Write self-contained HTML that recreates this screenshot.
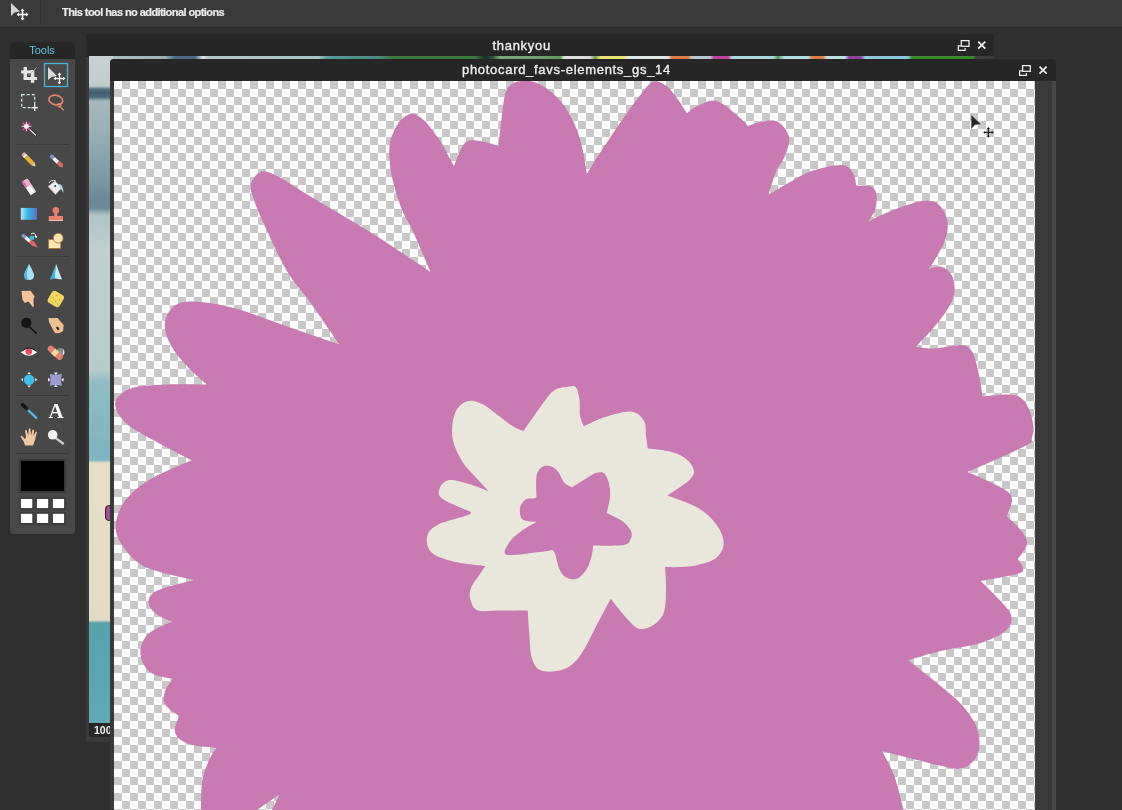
<!DOCTYPE html>
<html><head><meta charset="utf-8">
<style>
html,body{margin:0;padding:0;}
body{-webkit-font-smoothing:antialiased;width:1122px;height:810px;overflow:hidden;background:#2f2f2f;position:relative;font-family:"Liberation Sans",sans-serif;}
.abs{position:absolute;}
.txt,.tb,.hdr,text{will-change:transform;}
#topbar{left:0;top:0;width:1122px;height:27px;background:#3a3a3a;border-bottom:1px solid #2a2a2a;}
#topbar .sep{left:40px;top:0;width:1px;height:24px;background:#303030;}
#topbar .txt{left:62px;top:6px;-webkit-text-stroke:0.2px #ececec;font-size:11px;font-weight:bold;color:#ececec;white-space:nowrap;letter-spacing:-0.57px;}
#tools{left:10px;top:42px;width:65px;height:492px;background:#484848;border-radius:4px;overflow:hidden;}
#tools .hdr{left:0;top:0;width:65px;height:17px;background:#262626;color:#5ec6de;font-size:11px;text-align:center;line-height:17px;text-indent:-1px;}
#tools .hsep{left:6px;width:53px;height:1px;background:#393939;}
#back{left:86px;top:34px;width:908px;height:708px;background:#3a3a3a;border-radius:2px;overflow:hidden;}
#back .tb{left:0;top:0;width:908px;height:23px;-webkit-text-stroke:0.35px #f0f0f0;background:#262626;color:#f0f0f0;font-size:13px;text-align:center;line-height:23px;letter-spacing:0.7px;}
#back .ft{left:3px;top:689px;width:905px;height:14px;background:#262626;}
#front{left:110px;top:59px;width:946px;height:760px;background:#3a3a3a;border-radius:4px 4px 0 0;overflow:hidden;}
#front .tb{left:0;top:0;width:946px;height:22px;-webkit-text-stroke:0.35px #f0f0f0;background:#262626;color:#f0f0f0;font-size:13px;text-align:center;line-height:22px;letter-spacing:0.7px;}
#checker{left:4px;top:22px;width:921px;height:740px;background:conic-gradient(#c8c8c8 25%,#fff 0 50%,#c8c8c8 0 75%,#fff 0);background-size:16px 16px;background-position:0 0;}
</style></head><body>
<div id="topbar" class="abs">
 <svg class="abs" style="left:0;top:0" width="40" height="27" viewBox="0 0 40 27">
  <path d="M11 3 L11 16 L14.5 12.5 L20 11.5 Z" fill="#d4d4d4"/>
  <g stroke="#fff" stroke-width="1.6" fill="#fff">
   <line x1="17.5" y1="14.5" x2="27.5" y2="14.5"/><line x1="22.5" y1="9.5" x2="22.5" y2="19.5"/>
  </g>
  <path d="M22.5 8.5 L20.5 11 L24.5 11Z M22.5 20.5 L20.5 18 L24.5 18Z M16.5 14.5 L19 12.5 L19 16.5Z M28.5 14.5 L26 12.5 L26 16.5Z" fill="#fff"/>
 </svg>
 <div class="abs sep"></div>
 <div class="abs txt">This tool has no additional options</div>
</div>

<div id="tools" class="abs">
 <div class="abs hdr">Tools</div>
</div>
<svg class="abs" style="left:0;top:0" width="80" height="540" viewBox="0 0 80 540">
 <g fill="#393939"><rect x="16" y="144" width="53" height="1"/><rect x="16" y="256" width="53" height="1"/><rect x="16" y="395" width="53" height="1"/><rect x="16" y="453" width="53" height="1"/></g>
 <!-- selected box -->
 <rect x="44.5" y="63.5" width="23" height="23" fill="#4a4a4a" stroke="#4ab8d4" stroke-width="1.3"/>
 <!-- move icon -->
 <path d="M48 67 L48 80 L51.5 77 L57 76 Z" fill="#d8d8d8"/>
 <g stroke="#fff" stroke-width="1.3"><line x1="54.5" y1="78.5" x2="64.5" y2="78.5"/><line x1="59.5" y1="73.5" x2="59.5" y2="83.5"/></g>
 <path d="M59.5 72.5 L57.7 75 L61.3 75Z M59.5 84.5 L57.7 82 L61.3 82Z M53.5 78.5 L56 76.7 L56 80.3Z M65.5 78.5 L63 76.7 L63 80.3Z" fill="#fff"/>
 <!-- crop -->
 <g fill="#e4e4e4"><rect x="23.6" y="67" width="3.4" height="12"/><rect x="21.2" y="70.4" width="12" height="3.1"/><rect x="30.9" y="70" width="3.4" height="12.8"/><rect x="23.6" y="77" width="13.4" height="3"/></g>
 <line x1="28.4" y1="75.9" x2="36.7" y2="67.3" stroke="#aaa" stroke-width="0.8"/>
 <!-- marquee -->
 <rect x="21.7" y="94.7" width="13" height="13" fill="none" stroke="#d6eeee" stroke-width="1.2" stroke-dasharray="3 2"/>
 <g stroke="#fff" stroke-width="1.2"><line x1="31.5" y1="107.7" x2="38" y2="107.7"/><line x1="34.7" y1="104.5" x2="34.7" y2="111"/></g>
 <!-- lasso -->
 <ellipse cx="55.8" cy="100" rx="7" ry="4.7" fill="none" stroke="#e8806e" stroke-width="1.7" transform="rotate(12 55.8 100)"/>
 <path d="M57 104.5 Q60.5 103.5 61 105.5 Q60.5 107.5 58.5 106.5 Q59 105 63.8 110.3" fill="none" stroke="#e8806e" stroke-width="1.4"/>
 <!-- wand -->
 <line x1="27" y1="127" x2="35.5" y2="135" stroke="#222" stroke-width="2.6" stroke-linecap="round"/>
 <line x1="27" y1="127" x2="35.5" y2="135" stroke="#eee" stroke-width="1.2" stroke-linecap="round"/>
 <g stroke="#e04890" stroke-width="1.4"><line x1="26.4" y1="121.2" x2="26.4" y2="131.6"/><line x1="21.2" y1="126.4" x2="31.6" y2="126.4"/><line x1="22.7" y1="122.7" x2="30.1" y2="130.1"/><line x1="30.1" y1="122.7" x2="22.7" y2="130.1"/></g>
 <circle cx="26.4" cy="126.4" r="2.4" fill="#fff"/>
 <g stroke="#fff" stroke-width="0.7"><line x1="26.4" y1="122" x2="26.4" y2="131"/><line x1="22" y1="126.4" x2="31" y2="126.4"/></g>
 <!-- pencil -->
 <g transform="translate(22.6 153.4) rotate(45)">
  <rect x="0" y="-2.2" width="3" height="4.4" rx="1.5" fill="#f0a0b8"/><rect x="2.5" y="-2.2" width="2.2" height="4.4" fill="#f4f4f4"/>
  <rect x="4.6" y="-2.2" width="10" height="4.4" fill="#e8b030"/><path d="M14.6 -2.2 L18.4 0 L14.6 2.2Z" fill="#f4dca8"/>
 </g>
 <!-- brush -->
 <g transform="translate(50.3 155.2) rotate(43)">
  <rect x="0" y="-2" width="5" height="4" rx="2" fill="#8a8cd0"/><rect x="4.5" y="-1.8" width="6" height="3.6" fill="#f8f8f8"/>
  <path d="M10.5 -2 L15 -2.2 L17.5 0 L15 2.2 L10.5 2Z" fill="#e06464"/>
 </g>
 <!-- eraser -->
 <g transform="rotate(57 29 186.8)">
  <rect x="21" y="183.6" width="16" height="6.4" rx="1" fill="#f6f6f6"/>
  <rect x="21" y="183.6" width="7" height="6.4" rx="1" fill="#f6a8c8"/>
  <rect x="21" y="188.2" width="7" height="1.8" fill="#e070b0"/>
  <rect x="28" y="183.6" width="9" height="1.6" fill="#d8d8d8"/>
 </g>
 <!-- bucket -->
 <path d="M48 186.5 L55 181 L61.5 188 L55.5 194.5 Z" fill="#ececec" stroke="#bbb" stroke-width="0.5"/>
 <path d="M49 183 Q51 179 56 181" fill="none" stroke="#ddd" stroke-width="1"/>
 <circle cx="55.2" cy="186" r="0.9" fill="#333"/>
 <path d="M58 184 Q63 183 63.5 193 Q61.5 190 60 187.5 Z" fill="#a8daf4"/>
 <!-- gradient -->
 <defs><linearGradient id="gr" x1="0" x2="1"><stop offset="0" stop-color="#b4e8fa"/><stop offset="0.45" stop-color="#30b4e4"/><stop offset="1" stop-color="#5a70c8"/></linearGradient></defs>
 <rect x="20.8" y="207.9" width="16.3" height="11.9" fill="url(#gr)"/>
 <!-- stamp -->
 <circle cx="55.8" cy="210.3" r="3.3" fill="#e8806a"/><rect x="54.3" y="211" width="3" height="5.5" fill="#e8806a"/>
 <rect x="48.8" y="216" width="14.2" height="4.8" fill="#e8806a"/><rect x="48.8" y="220" width="14.2" height="0.9" fill="#f8d0c0"/>
 <!-- color replace -->
 <g transform="translate(22 234.5) rotate(40)">
  <rect x="0" y="-1.9" width="5" height="3.8" rx="1.9" fill="#8a8cd0"/><rect x="4.5" y="-1.7" width="6" height="3.4" fill="#f8f8f8"/>
  <path d="M10.5 -1.9 L15 -2.1 L20.5 0 L15 2.1 L10.5 1.9Z" fill="#e06464"/>
 </g>
 <rect x="29.8" y="236" width="4.2" height="3.8" fill="#38bce8"/>
 <path d="M31 234 Q35 231.5 36 236.5" fill="none" stroke="#fff" stroke-width="1"/><path d="M34.5 236 L37.5 236 L36 238.5Z" fill="#fff"/>
 <!-- shapes -->
 <rect x="48.5" y="239.4" width="12.2" height="9.1" fill="#f8e8b0" stroke="#b0703a" stroke-width="0.8"/>
 <circle cx="58.2" cy="238.1" r="4.9" fill="#f8e8b0" stroke="#b0703a" stroke-width="0.8"/>
 <!-- drop -->
 <path d="M29.1 264 Q24 273 24.2 275.5 Q24.5 280 29.1 280 Q33.8 280 34.1 275.5 Q34.2 273 29.1 264Z" fill="#a8e2f8"/>
 <path d="M29.1 264 Q24 273 24.2 275.5 Q24.5 280 29.1 280 Q26 277 27 272 Z" fill="#40c0e8"/>
 <!-- sharpen -->
 <path d="M56.1 264 L49.9 279.6 L54.5 278.5 Z" fill="#30b8e0"/><path d="M56.1 264 L54.5 278.5 L62 279.6 Z" fill="#c4eefa"/>
 <!-- smudge hand -->
 <path d="M21.5 291 L30.5 290.8 L34.7 296.5 L33.5 299 L33.5 303 L34 306.5 L32.5 306.8 L28.5 301.5 L25 303 L22.5 300 Z" fill="#f2c496"/>
 <!-- sponge -->
 <rect x="49" y="292.2" width="13.6" height="13.6" rx="3.2" fill="#f2d860" transform="rotate(30 55.8 299)"/>
 <g fill="#e0a030"><circle cx="53" cy="297.5" r="0.8"/><circle cx="57" cy="295.5" r="0.8"/><circle cx="59.5" cy="300" r="0.8"/><circle cx="55.5" cy="301.5" r="0.8"/><circle cx="52.5" cy="302" r="0.6"/><circle cx="57.5" cy="304" r="0.7"/></g>
 <!-- burn -->
 <line x1="29.5" y1="327" x2="36.2" y2="333.2" stroke="#111" stroke-width="1.6" stroke-linecap="round"/>
 <circle cx="26.4" cy="322.8" r="5.1" fill="#141414"/>
 <!-- dodge hand -->
 <path d="M48.5 318 L57.5 318 L63.7 325 L63 331 L59 333.2 L55 333 L52 328 L49 322 Z" fill="#f0c08e"/>
 <path d="M56 327 Q58.5 326 59.5 329 L57.5 330.5 Z" fill="#2a2a2a"/>
 <!-- red eye -->
 <path d="M20.8 352.2 Q28.9 345 37.1 352.2 Q28.9 359.2 20.8 352.2Z" fill="#fafafa"/>
 <circle cx="28.8" cy="351.6" r="3.3" fill="#f04860"/>
 <path d="M22.5 350.5 Q28.9 345.5 35.5 350.5" fill="none" stroke="#1a1a1a" stroke-width="1"/>
 <!-- bandage -->
 <circle cx="60.5" cy="352" r="4" fill="#8a8a8a"/><path d="M63.5 349 L64.5 353 L62.5 356Z" fill="#eee"/>
 <g transform="rotate(42 55.2 352.8)"><rect x="46.2" y="349.7" width="18" height="6.2" rx="3.1" fill="#e88070"/><rect x="52.5" y="349.7" width="5" height="6.2" fill="#f8dca0"/></g>
 <!-- bloat -->
 <circle cx="29.1" cy="379.8" r="5.2" fill="#40c0e8"/>
 <g fill="#f4f4f4"><path d="M29.1 372 L27.3 374 L30.9 374Z"/><path d="M29.1 387.6 L27.3 385.6 L30.9 385.6Z"/><path d="M21 379.8 L23 378 L23 381.6Z"/><path d="M37.2 379.8 L35.2 378 L35.2 381.6Z"/></g>
 <!-- pinch -->
 <path d="M49.8 373.8 Q55.8 375.5 61.8 373.8 Q60.3 379.8 61.8 385.8 Q55.8 384.3 49.8 385.8 Q51.3 379.8 49.8 373.8Z" fill="#9a9ccc"/>
 <g fill="#f4f4f4"><path d="M55.8 375 L53.8 372.5 L57.8 372.5Z"/><path d="M55.8 384.6 L53.8 387 L57.8 387Z"/><path d="M50.5 379.8 L48 377.8 L48 381.8Z"/><path d="M61.1 379.8 L63.6 377.8 L63.6 381.8Z"/></g>
 <!-- eyedropper -->
 <line x1="27.5" y1="409.5" x2="36" y2="417.6" stroke="#5ab8f0" stroke-width="2.4" stroke-linecap="round"/>
 <line x1="22.6" y1="404.8" x2="25.6" y2="407.6" stroke="#141414" stroke-width="3.6" stroke-linecap="round"/>
 <line x1="25.5" y1="407.6" x2="28" y2="410" stroke="#202020" stroke-width="3" />
 <!-- A -->
 <text x="56.2" y="418.2" font-family="Liberation Serif" font-weight="bold" font-size="21" fill="#fff" text-anchor="middle">A</text>
 <!-- hand -->
 <path d="M25 445.5 L33 445.5 L35 440 L37 432 L36 431.5 L33.5 436 L34 430 L32.5 429.5 L31 435.5 L30.5 428.6 L28.8 428.6 L28.3 435.5 L26.5 430 L25 430.5 L26 437.5 L25 439 L21.5 435.5 L20.5 436.5 L24 442 Z" fill="#f2c8a0"/>
 <!-- zoom -->
 <line x1="56" y1="438.2" x2="63" y2="443.5" stroke="#c8c8c8" stroke-width="2.4" stroke-linecap="round"/>
 <circle cx="52.7" cy="434.8" r="4.8" fill="#f4f4f4"/>
 <!-- swatches -->
 <rect x="19.2" y="459.2" width="46.7" height="33.7" fill="#383838"/>
 <rect x="20.9" y="460.9" width="43.1" height="30.1" fill="#000"/>
 <g fill="#383838"><rect x="19.4" y="497.4" width="14.4" height="12.2"/><rect x="35.4" y="497.4" width="14.3" height="12.2"/><rect x="51.4" y="497.4" width="14.2" height="12.2"/><rect x="19.4" y="512.3" width="14.4" height="12.2"/><rect x="35.4" y="512.3" width="14.3" height="12.2"/><rect x="51.4" y="512.3" width="14.2" height="12.2"/></g>
 <g fill="#fff"><rect x="20.9" y="498.9" width="11.4" height="9.2"/><rect x="36.9" y="498.9" width="11.3" height="9.2"/><rect x="52.9" y="498.9" width="11.2" height="9.2"/><rect x="20.9" y="513.8" width="11.4" height="9.2"/><rect x="36.9" y="513.8" width="11.3" height="9.2"/><rect x="52.9" y="513.8" width="11.2" height="9.2"/></g>
</svg>

<div id="back" class="abs">
 <div class="abs tb" style="text-align:left;text-indent:406.5px">thankyou</div>
 <div class="abs" style="left:3px;top:22px;width:905px;height:6px;background:linear-gradient(90deg,#c8d0d0 0.00px,#c4cece 19.00px,#a8c0c0 23.00px,#9ab4b8 76.00px,#4a6a8a 86.00px,#4a6a8a 106.00px,#e0e8e8 114.00px,#b0c8c8 119.00px,#a8c4c4 229.00px,#5a9aa0 239.00px,#4a8a7a 291.00px,#3a7a3a 301.00px,#3a7a3a 386.00px,#1a3030 396.00px,#2a4a3a 403.00px,#7aaa7a 411.00px,#6aa06a 456.00px,#5a9a5a 471.00px,#e0e0e0 475.00px,#dcdcdc 501.00px,#6a9a5a 506.00px,#e8e070 511.00px,#e8e070 535.00px,#e0e8e8 539.00px,#e0e8e8 579.00px,#e07a40 583.00px,#e07a40 599.00px,#b8c8d0 603.00px,#b8c8d0 621.00px,#c040a0 625.00px,#c040a0 639.00px,#a8d8e0 643.00px,#a8d8e0 684.00px,#5a9a5a 689.00px,#b0e0e8 695.00px,#b0e0e8 719.00px,#e08040 723.00px,#e08040 734.00px,#c0e0e8 738.00px,#c0e0e8 756.00px,#9040a0 760.00px,#9040a0 772.00px,#90c8e0 776.00px,#90c8e0 819.00px,#3a8a2a 823.00px,#3a8a2a 884.00px,#404040 887.00px,#3a3a3a 905.00px);"></div>
 <div class="abs" style="left:3px;top:22px;width:24px;height:667px;background:linear-gradient(180deg,#c8d2d2 0.00px,#c2cdce 30.00px,#5a7888 33.00px,#405c72 36.00px,#4c687a 41.00px,#a4b8bc 45.00px,#9cb2b6 69.00px,#8ca8b0 94.00px,#7a98a4 124.00px,#6a8898 142.00px,#6c8a98 152.00px,#b0c4c6 159.00px,#c0d0d0 194.00px,#b8cccc 314.00px,#90bcc4 326.00px,#7cb4c0 404.00px,#e6dec4 407.00px,#e2dac4 564.00px,#58a2ac 567.00px,#5aa6b0 624.00px,#60acb6 667.00px);"></div>
 <div class="abs" style="left:19px;top:471px;width:8px;height:16px;background:#a04c94;border:1px solid #3a2030;box-sizing:border-box;border-radius:4px;"></div>
 <div class="abs ft"></div>
 <div class="abs" style="left:8px;top:689px;font-size:10.5px;font-weight:bold;color:#f4f4f4;line-height:14px;">100%</div>
</div>

<div id="front" class="abs">
 <div class="abs tb" style="text-align:left;text-indent:352px">photocard_favs-elements_gs_14</div>
 <div id="checker" class="abs"></div>
 <div class="abs" style="left:925px;top:22px;width:17px;height:740px;background:#3a3a3a;"></div>
 <div class="abs" style="left:942px;top:22px;width:4px;height:740px;background:#484848;"></div>
</div>

<svg class="abs" style="left:0;top:0" width="1122" height="810" viewBox="0 0 1122 810">
 <defs><clipPath id="cl"><rect x="114" y="81" width="921" height="729"/></clipPath></defs>
 <g clip-path="url(#cl)">
  <path d="M202.0 782.0 C203.3 773.1 206.4 766.3 208.8 760.6 C211.2 754.9 216.5 747.7 216.5 747.7 C216.5 747.7 199.5 746.7 193.3 745.2 C187.1 743.8 182.5 741.6 179.4 739.0 C176.3 736.4 174.8 733.6 174.8 729.8 C174.8 725.9 179.4 715.9 179.4 715.9 C179.4 715.9 174.3 713.3 171.7 711.0 C169.1 708.7 165.0 705.6 164.0 702.0 C163.0 698.4 164.1 693.5 165.6 689.6 C167.1 685.7 173.0 678.8 173.0 678.8 C173.0 678.8 158.1 676.8 153.0 674.0 C147.9 671.2 144.4 666.5 142.4 661.9 C140.4 657.3 139.7 651.3 141.0 646.4 C142.3 641.5 144.9 636.6 150.0 632.5 C155.1 628.4 171.7 621.7 171.7 621.7 C171.7 621.7 160.2 617.1 156.3 614.0 C152.5 610.9 148.6 606.8 148.6 603.0 C148.6 599.2 148.7 594.8 156.3 591.0 C163.9 587.2 194.0 580.0 194.0 580.0 C194.0 580.0 158.5 573.0 147.0 567.8 C135.5 562.6 130.0 555.8 124.8 549.0 C119.6 542.2 115.6 535.0 115.6 527.0 C115.6 519.0 119.0 509.0 124.8 501.0 C130.7 493.0 139.6 485.7 150.7 478.9 C161.8 472.1 191.5 460.4 191.5 460.4 C191.5 460.4 151.3 439.7 139.6 432.6 C127.8 425.5 125.0 423.1 121.0 417.8 C117.0 412.5 113.8 406.0 115.6 401.0 C117.4 396.0 123.7 390.8 132.0 388.0 C140.3 385.2 153.1 385.0 165.6 384.4 C178.1 383.8 207.0 384.5 207.0 384.5 C207.0 384.5 199.7 378.9 194.6 373.8 C189.5 368.8 181.3 360.3 176.7 354.2 C172.1 348.1 168.9 342.4 167.0 337.0 C165.1 331.6 164.2 326.8 165.0 322.0 C165.8 317.2 168.5 311.4 172.0 308.0 C175.5 304.6 179.3 302.6 186.0 301.8 C192.7 301.0 203.6 302.1 212.4 303.4 C221.2 304.7 228.7 306.5 239.1 309.6 C249.5 312.7 262.9 317.9 274.8 322.1 C286.7 326.3 299.6 330.9 310.4 334.6 C321.1 338.3 339.3 344.5 339.3 344.5 C339.3 344.5 318.8 314.4 310.0 302.0 C301.2 289.6 294.2 283.5 286.3 270.0 C278.4 256.5 268.0 232.8 262.6 221.0 C257.2 209.2 255.7 205.1 253.7 198.9 C251.7 192.7 249.3 188.6 250.7 184.0 C252.1 179.4 256.8 172.5 261.9 171.5 C266.9 170.5 274.5 174.8 281.0 178.0 C287.5 181.2 291.9 185.0 300.8 190.5 C309.8 196.0 323.4 204.0 334.7 210.8 C346.0 217.6 357.2 224.1 368.5 231.1 C379.8 238.1 392.1 246.3 402.4 253.1 C412.7 259.9 430.4 271.8 430.4 271.8 C430.4 271.8 417.7 241.7 413.0 231.5 C408.3 221.3 405.6 218.5 402.4 210.8 C399.2 203.1 396.1 193.2 394.0 185.4 C391.9 177.6 390.6 171.0 389.9 164.2 C389.2 157.4 389.0 149.9 389.6 144.5 C390.2 139.1 391.6 136.1 393.5 132.0 C395.4 127.9 397.8 122.8 401.0 119.8 C404.2 116.8 408.7 113.6 412.6 113.8 C416.5 114.0 421.0 117.8 424.5 120.8 C428.0 123.8 430.6 128.0 433.4 131.6 C436.2 135.2 439.0 138.9 441.3 142.5 C443.6 146.1 445.1 149.5 447.2 153.4 C449.3 157.3 454.1 166.2 454.1 166.2 C454.1 166.2 460.7 147.0 465.0 142.8 C469.3 138.6 474.4 140.5 480.0 141.0 C485.6 141.5 498.5 146.0 498.5 146.0 C498.5 146.0 500.8 123.8 502.0 115.0 C503.2 106.2 503.8 98.2 505.5 93.0 C507.2 87.8 509.2 86.0 512.0 84.0 C514.8 82.0 518.3 81.3 522.0 81.0 C525.7 80.7 529.6 80.5 534.0 82.0 C538.4 83.5 543.9 86.2 548.6 89.8 C553.3 93.4 558.2 98.0 562.4 103.5 C566.6 109.0 570.7 115.8 574.0 123.0 C577.3 130.2 579.9 138.1 582.0 146.6 C584.1 155.1 586.9 174.0 586.9 174.0 C586.9 174.0 592.5 164.3 597.6 156.5 C602.7 148.7 610.8 136.5 617.3 127.0 C623.8 117.5 631.0 107.1 636.9 99.6 C642.8 92.1 647.6 84.3 652.5 82.0 C657.4 79.7 662.0 82.9 666.3 85.8 C670.5 88.7 674.6 95.0 678.0 99.6 C681.4 104.2 686.9 113.4 686.9 113.4 C686.9 113.4 693.0 107.9 698.0 105.8 C703.0 103.7 709.9 99.1 716.7 101.0 C723.5 102.9 733.8 112.8 739.0 117.0 C744.2 121.2 748.0 126.0 748.0 126.0 C748.0 126.0 756.0 122.4 761.0 121.7 C766.0 121.0 773.1 119.2 777.8 121.7 C782.5 124.2 787.8 131.3 789.0 137.0 C790.2 142.7 787.2 150.0 785.0 155.8 C782.8 161.6 778.8 165.5 776.0 172.0 C773.2 178.5 768.5 194.7 768.5 194.7 C768.5 194.7 783.3 185.7 790.7 181.7 C798.1 177.7 804.4 173.4 813.0 170.6 C821.6 167.8 835.8 164.4 842.6 165.0 C849.4 165.6 851.5 170.8 853.7 174.3 C855.9 177.8 856.0 186.0 856.0 186.0 C856.0 186.0 866.6 184.7 870.0 186.0 C873.4 187.3 875.7 190.0 876.5 194.0 C877.3 198.0 876.5 205.2 875.0 210.0 C873.5 214.8 867.5 222.6 867.5 222.6 C867.5 222.6 877.3 216.5 886.0 213.0 C894.7 209.5 910.9 203.0 919.6 201.5 C928.3 200.0 933.4 200.8 938.0 204.0 C942.6 207.2 946.1 214.9 947.4 220.7 C948.6 226.5 947.4 232.8 945.5 239.0 C943.6 245.2 938.8 252.8 936.0 257.8 C933.2 262.8 929.0 268.9 929.0 268.9 C929.0 268.9 938.0 265.5 942.0 267.0 C946.0 268.5 951.2 272.8 953.0 278.0 C954.8 283.2 955.5 291.1 953.0 298.5 C950.5 305.9 944.2 314.6 938.0 322.6 C931.8 330.6 916.0 346.7 916.0 346.7 C916.0 346.7 926.9 348.8 934.4 348.5 C941.9 348.2 954.9 344.8 961.0 345.0 C967.1 345.2 968.5 347.2 971.0 350.0 C973.5 352.8 974.5 357.0 976.0 362.0 C977.5 367.0 978.9 374.2 980.0 380.0 C981.1 385.8 982.6 396.7 982.6 396.7 C982.6 396.7 1004.9 393.9 1012.0 394.8 C1019.1 395.7 1021.6 397.7 1025.0 402.0 C1028.4 406.3 1031.4 414.7 1032.6 420.7 C1033.8 426.7 1033.3 433.8 1032.0 438.0 C1030.7 442.2 1035.7 440.4 1025.0 446.0 C1014.3 451.6 967.8 471.9 967.8 471.9 C967.8 471.9 995.6 483.9 1003.0 488.5 C1010.4 493.1 1011.4 495.0 1012.0 499.6 C1012.6 504.2 1006.7 516.3 1006.7 516.3 C1006.7 516.3 1018.1 526.4 1021.5 531.0 C1024.9 535.6 1027.6 539.3 1027.0 544.0 C1026.4 548.7 1017.8 559.0 1017.8 559.0 C1017.8 559.0 1023.0 565.5 1023.0 568.0 C1023.0 570.5 1024.8 571.5 1017.8 573.7 C1010.8 575.9 980.7 581.0 980.7 581.0 C980.7 581.0 1000.2 600.0 1005.4 606.3 C1010.5 612.6 1011.6 614.5 1011.6 618.6 C1011.6 622.7 1010.5 626.9 1005.4 631.0 C1000.2 635.1 991.5 639.7 980.7 643.0 C969.9 646.3 952.7 648.1 940.6 651.0 C928.5 653.9 908.2 660.3 908.2 660.3 C908.2 660.3 928.5 676.0 937.5 683.5 C946.5 691.0 955.3 697.3 962.0 705.0 C968.7 712.7 975.0 721.6 977.6 729.8 C980.2 738.0 980.2 748.0 977.6 754.4 C975.0 760.8 968.7 766.5 962.0 768.3 C955.3 770.1 950.8 767.9 937.5 765.0 C924.2 762.1 882.0 751.0 882.0 751.0 C882.0 751.0 890.7 766.2 894.3 776.0 C897.9 785.8 901.8 803.7 903.6 810.0 C905.4 816.3 905.0 814.0 905.0 814.0 C905.0 814.0 270.0 814.0 270.0 814.0 C270.0 814.0 279.6 794.3 279.6 794.3 C279.6 794.3 251.5 814.0 251.5 814.0 C251.5 814.0 201.0 814.0 201.0 814.0 C201.0 814.0 200.7 790.9 202.0 782.0 Z" fill="#c97ab3"/>
  <path d="M452.0 431.0 C452.0 425.8 452.9 419.0 454.5 414.5 C456.1 410.0 458.6 406.5 461.5 404.2 C464.4 401.9 467.8 400.4 471.8 400.7 C475.8 401.0 481.0 403.3 485.6 405.9 C490.2 408.5 494.8 412.9 499.4 416.3 C504.0 419.8 509.3 424.2 513.3 426.6 C517.3 429.1 523.6 431.0 523.6 431.0 C523.6 431.0 533.5 416.3 538.5 409.6 C543.5 402.9 548.4 394.8 553.3 391.0 C558.2 387.2 564.2 387.3 568.0 386.7 C571.8 386.1 574.1 385.3 576.0 387.5 C577.9 389.7 578.8 395.1 579.5 399.8 C580.2 404.5 579.3 411.2 580.0 415.6 C580.7 420.0 583.8 426.4 583.8 426.4 C583.8 426.4 597.1 419.5 605.0 417.0 C612.9 414.5 624.5 410.9 631.0 411.5 C637.5 412.1 641.5 416.7 644.0 420.7 C646.5 424.7 645.4 430.9 646.0 435.5 C646.6 440.1 647.8 448.5 647.8 448.5 C647.8 448.5 665.4 450.1 671.9 452.0 C678.4 453.9 683.0 456.5 686.7 459.6 C690.4 462.7 693.4 467.5 694.0 470.7 C694.6 473.9 692.7 476.1 690.5 478.8 C688.3 481.5 684.5 483.9 680.6 486.7 C676.7 489.5 667.0 495.6 667.0 495.6 C667.0 495.6 689.6 503.0 697.8 507.8 C706.0 512.6 712.0 518.5 716.3 524.4 C720.6 530.3 723.7 537.4 723.7 543.0 C723.7 548.6 720.6 554.1 716.3 557.8 C712.0 561.5 703.8 563.5 697.8 565.0 C691.8 566.5 685.5 566.7 680.0 567.0 C674.5 567.3 665.0 567.0 665.0 567.0 C665.0 567.0 666.2 582.5 666.0 590.0 C665.8 597.5 665.8 606.3 664.0 612.0 C662.2 617.7 658.8 621.2 655.0 624.0 C651.2 626.8 645.2 629.3 641.0 629.0 C636.8 628.7 635.0 627.0 630.0 622.0 C625.0 617.0 610.7 598.8 610.7 598.8 C610.7 598.8 601.9 615.6 596.8 625.0 C591.7 634.4 585.8 648.0 580.3 655.4 C574.8 662.8 570.2 666.7 563.7 669.2 C557.2 671.7 546.9 672.4 541.6 670.6 C536.3 668.8 534.0 664.9 531.9 658.2 C529.8 651.5 529.8 638.4 529.1 630.5 C528.4 622.6 527.8 611.0 527.8 611.0 C527.8 611.0 508.3 610.6 500.0 610.5 C491.7 610.4 482.9 612.2 478.0 610.5 C473.1 608.8 471.7 603.8 470.5 600.0 C469.3 596.2 469.4 592.3 471.0 588.0 C472.6 583.7 477.6 577.7 480.0 574.0 C482.4 570.3 485.5 566.0 485.5 566.0 C485.5 566.0 462.4 563.8 453.3 561.5 C444.2 559.2 435.3 556.3 431.0 552.0 C426.7 547.7 426.1 540.2 427.4 535.6 C428.6 531.0 431.7 527.8 438.5 524.4 C445.3 521.0 462.8 517.1 468.0 515.0 C473.2 512.9 470.0 511.5 470.0 511.5 C470.0 511.5 447.0 502.5 442.0 498.5 C437.0 494.5 438.7 490.5 440.0 487.4 C441.3 484.3 444.9 480.6 449.6 480.0 C454.3 479.4 461.5 481.9 468.0 483.7 C474.5 485.5 488.5 491.0 488.5 491.0 C488.5 491.0 479.5 481.4 475.3 476.7 C471.1 472.0 466.7 468.1 463.2 462.9 C459.7 457.7 456.4 450.9 454.5 445.6 C452.6 440.3 452.0 436.2 452.0 431.0 Z" fill="#e9e7db"/>
  <path d="M536.5 476.0 C537.4 471.1 539.5 468.8 541.7 467.2 C543.9 465.6 547.1 465.4 549.8 466.1 C552.5 466.8 555.4 468.5 557.8 471.2 C560.2 473.9 561.8 479.8 564.2 482.5 C566.6 485.2 572.2 487.3 572.2 487.3 C572.2 487.3 581.0 481.7 585.0 479.3 C589.0 476.9 593.1 473.8 596.3 472.8 C599.5 471.9 602.2 471.7 604.3 473.6 C606.4 475.5 608.1 480.2 609.1 484.1 C610.1 488.0 610.4 492.1 610.0 496.9 C609.6 501.7 606.7 513.0 606.7 513.0 C606.7 513.0 618.0 518.1 622.0 521.0 C626.0 523.9 629.3 527.6 630.8 530.6 C632.3 533.6 632.0 536.3 630.8 538.7 C629.6 541.1 629.9 543.9 623.6 545.0 C617.3 546.1 593.1 545.5 593.1 545.5 C593.1 545.5 592.6 552.4 591.5 556.3 C590.4 560.2 589.1 565.4 586.7 569.1 C584.3 572.9 580.5 577.4 577.0 578.8 C573.5 580.1 568.7 578.8 565.8 577.2 C562.9 575.6 561.1 572.9 559.4 569.1 C557.7 565.4 556.5 557.9 555.4 554.7 C554.3 551.5 553.0 549.9 553.0 549.9 C553.0 549.9 544.7 551.5 536.9 552.3 C529.1 553.1 510.9 556.4 506.4 554.7 C501.8 553.0 507.2 545.8 509.6 541.9 C512.0 538.0 516.4 534.8 520.9 531.4 C525.4 528.0 536.9 521.8 536.9 521.8 C536.9 521.8 525.3 521.7 522.5 519.4 C519.7 517.1 519.5 511.5 520.0 508.2 C520.5 504.9 523.4 500.9 525.7 499.3 C528.0 497.7 531.9 498.9 533.7 498.5 C535.5 498.1 536.5 496.9 536.5 496.9 C536.5 496.9 535.6 480.9 536.5 476.0 Z" fill="#c97ab3"/>
 </g>
</svg>
<svg class="abs" style="left:0;top:0" width="1122" height="810" viewBox="0 0 1122 810">
 <g id="wc" fill="none" stroke="#f4f4f4" stroke-width="1.25">
  <rect x="1022.6" y="65.6" width="7.7" height="5.7"/>
  <path d="M1022 70.8 L1019.6 70.8 L1019.6 75.3 L1026.4 75.3 L1026.4 72.9"/>
  <path d="M1039.5 66.6 L1046.6 73.6 M1046.6 66.6 L1039.5 73.6" stroke-width="1.7"/>
 </g>
 <use href="#wc" transform="translate(-61.3 -25)"/>
 <!-- cursor -->
 <path d="M971.1 114.6 L971.1 129.2 L974.9 125 L981.3 124.6 Z" fill="#282828" stroke="#e8e8e8" stroke-width="0.45" stroke-linejoin="round"/>
 <g stroke="#111" stroke-width="1.1"><line x1="984" y1="132.4" x2="993" y2="132.4"/><line x1="988.4" y1="128" x2="988.4" y2="137"/></g>
 <path d="M988.4 127 L986.9 129 L989.9 129Z M988.4 137.8 L986.9 135.8 L989.9 135.8Z M983.2 132.4 L985.2 130.9 L985.2 133.9Z M993.8 132.4 L991.8 130.9 L991.8 133.9Z" fill="#111"/>
</svg>
</body></html>
